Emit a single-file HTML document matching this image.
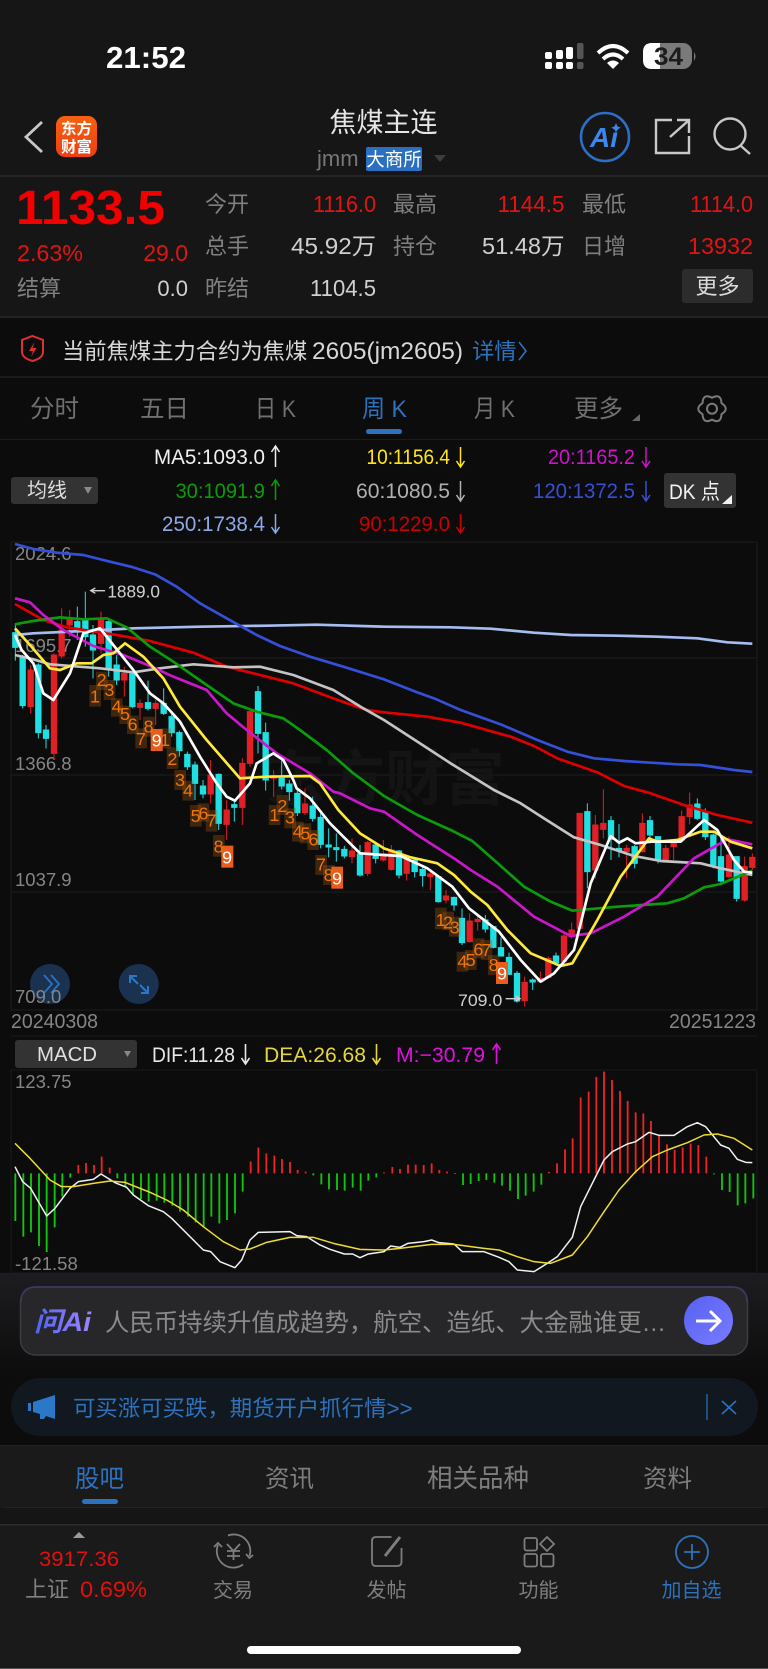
<!DOCTYPE html>
<html lang="zh"><head><meta charset="utf-8"><title>焦煤主连</title>
<style>
html,body{margin:0;padding:0;background:#0c0c0c;width:768px;height:1669px;overflow:hidden}
svg{display:block}
text{font-family:"Liberation Sans","Noto Sans CJK SC",sans-serif}
.g{fill:#808080}.w{fill:#d0d0d0}.r{fill:#e01414}.b{fill:#2c72bd}.e{text-anchor:end}.m{text-anchor:middle}
.f22{font-size:22px}.f23{font-size:23px}
.lab{font-size:18.5px;fill:#858585}
.ma{font-size:21px}
.td{font-size:54px;fill:#f07408;text-anchor:middle}
.n9{font-size:54px;fill:#fff;text-anchor:middle}
</style></head><body>
<svg width="768" height="1669" viewBox="0 0 768 1669" xmlns="http://www.w3.org/2000/svg">
<defs>
<linearGradient id="ai" gradientUnits="userSpaceOnUse" x1="34" y1="0" x2="92" y2="0"><stop offset="0" stop-color="#4f63f5"/><stop offset="1" stop-color="#9f84ff"/></linearGradient>
<linearGradient id="bt" x1="0" y1="0" x2="1" y2="1"><stop offset="0" stop-color="#5660f2"/><stop offset="1" stop-color="#7a7cff"/></linearGradient>
<linearGradient id="fade" x1="0" y1="0" x2="0" y2="1"><stop offset="0" stop-color="#1d1d21"/><stop offset="1" stop-color="#0d0d0d"/></linearGradient>
<linearGradient id="logo" x1="0" y1="0" x2="0" y2="1"><stop offset="0" stop-color="#f5620f"/><stop offset="1" stop-color="#ee3f12"/></linearGradient>
</defs>

<rect width="768" height="1669" fill="#0c0c0c"/>
<!-- status + header -->
<rect width="768" height="317" fill="#161616"/>
<text x="106" y="68" font-size="31" font-weight="700" fill="#fff" textLength="80" lengthAdjust="spacingAndGlyphs">21:52</text>
<g fill="#fff">
<rect x="545" y="52" width="7" height="7" rx="2"/><rect x="556" y="50" width="7" height="9" rx="2"/><rect x="566" y="47" width="7" height="12" rx="2"/>
<rect x="545" y="62" width="7" height="7" rx="2"/><rect x="556" y="62" width="7" height="7" rx="2"/><rect x="566" y="62" width="7" height="7" rx="2"/>
</g>
<rect x="577" y="43" width="6.5" height="16" rx="2" fill="#555"/><rect x="577" y="62" width="6.5" height="7" rx="2" fill="#555"/>
<g fill="none" stroke="#fff" stroke-width="4">
<path d="M598 53Q613 39 628 53"/><path d="M603 59Q613 50 623 59"/>
</g><path d="M607 63Q613 58 619 63L613 69Z" fill="#fff"/>
<rect x="643" y="43" width="49" height="26" rx="9" fill="#7a7a7a"/>
<path d="M652 43H660V69H652Q643 69 643 60V52Q643 43 652 43Z" fill="#fff"/>
<path d="M694 52Q697 56 694 61Z" fill="#777"/>
<text x="654" y="65" font-size="25" font-weight="700" fill="#1c1c1c" textLength="29" lengthAdjust="spacingAndGlyphs">34</text>

<path d="M42 122L26 137L42 152" fill="none" stroke="#c8c8c8" stroke-width="2.8"/>
<rect x="56" y="116" width="41" height="41" rx="9" fill="url(#logo)"/>
<text x="76.5" y="134" font-size="15.5" font-weight="700" fill="#fff" class="m">东方</text>
<text x="76.5" y="152" font-size="15.5" font-weight="700" fill="#fff" class="m">财富</text>
<text x="383.5" y="132" font-size="27" fill="#e6e6e6" class="m">焦煤主连</text>
<text x="317" y="166" font-size="22" fill="#777">jmm</text>
<rect x="366" y="147" width="56" height="24" rx="2" fill="#2a6fc0"/>
<text x="394" y="166" font-size="18.5" fill="#fff" class="m">大商所</text>
<path d="M434 155H446L440 162Z" fill="#3d3d3d"/>
<circle cx="605" cy="137" r="24" fill="none" stroke="#2c6fc4" stroke-width="2.6"/>
<text x="604" y="147" font-size="28" font-weight="700" font-style="italic" fill="#3b87f2" class="m">Ai</text>
<path d="M616 123l1.4 3.4 3.4 1.4-3.4 1.4-1.4 3.4-1.4-3.4-3.4-1.4 3.4-1.4z" fill="#3b87f2"/>
<path d="M672 120H656V153H689V136M670 137L688 121M677 120H689V133" fill="none" stroke="#c8c8c8" stroke-width="2.4"/>
<circle cx="730" cy="134" r="15.5" fill="none" stroke="#c8c8c8" stroke-width="2.4"/><path d="M741 146L750 154" stroke="#c8c8c8" stroke-width="2.4"/>
<rect y="175" width="768" height="2" fill="#232323"/>

<!-- quote -->
<text x="16" y="224" font-size="48" font-weight="700" fill="#f20000" textLength="149" lengthAdjust="spacingAndGlyphs">1133.5</text>
<text x="17" y="261" class="f23 r" textLength="66" lengthAdjust="spacingAndGlyphs">2.63%</text><text x="188" y="261" class="f23 r e">29.0</text>
<text x="17" y="296" class="g f22">结算</text><text x="188" y="296" class="w f22 e">0.0</text>

<text x="205" y="212" class="g f22">今开</text><text x="313" y="212" class="r f23" textLength="63" lengthAdjust="spacingAndGlyphs">1116.0</text>
<text x="393" y="212" class="g f22">最高</text><text x="497.5" y="212" class="r f23" textLength="67" lengthAdjust="spacingAndGlyphs">1144.5</text>
<text x="582" y="212" class="g f22">最低</text><text x="690" y="212" class="r f23" textLength="63" lengthAdjust="spacingAndGlyphs">1114.0</text>
<text x="205" y="254" class="g f22">总手</text><text x="291" y="254" class="w f23" textLength="85" lengthAdjust="spacingAndGlyphs">45.92万</text>
<text x="393" y="254" class="g f22">持仓</text><text x="482" y="254" class="w f23" textLength="82.5" lengthAdjust="spacingAndGlyphs">51.48万</text>
<text x="582" y="254" class="g f22">日增</text><text x="688" y="254" class="r f23" textLength="65" lengthAdjust="spacingAndGlyphs">13932</text>
<text x="205" y="296" class="g f22">昨结</text><text x="310" y="296" class="w f23" textLength="66" lengthAdjust="spacingAndGlyphs">1104.5</text>
<rect x="682" y="269" width="71" height="34" rx="3" fill="#2c2c2c"/>
<text x="717.5" y="294" font-size="22" fill="#dcdcdc" class="m">更多</text>
<rect y="316" width="768" height="2" fill="#232323"/>

<!-- banner -->
<path d="M32.5 336L43 340V352Q43 358 32.5 361Q22 358 22 352V340Z" fill="none" stroke="#e0302c" stroke-width="2"/>
<path d="M34.5 342L29 351H33L31 357L36.5 348H32.5Z" fill="#e0302c"/>
<text x="62" y="359" font-size="22.3" fill="#d8d8d8">当前焦煤主力合约为焦煤</text>
<text x="312" y="359" font-size="24" fill="#d8d8d8" textLength="151" lengthAdjust="spacingAndGlyphs">2605(jm2605)</text>
<text x="472" y="359" font-size="22.3" class="b">详情</text><path d="M519 342L526 351L519 360" fill="none" stroke="#2c72bd" stroke-width="1.6"/>
<rect y="376" width="768" height="2" fill="#1b1b1b"/>

<!-- period tabs -->
<g font-size="24.5" fill="#707070">
<text x="30" y="417">分时</text><text x="140" y="417">五日</text><text x="255" y="417" textLength="41" lengthAdjust="spacingAndGlyphs">日 K</text>
<text x="362" y="417" fill="#2c72bd" textLength="45" lengthAdjust="spacingAndGlyphs">周 K</text><text x="474" y="417" textLength="41" lengthAdjust="spacingAndGlyphs">月 K</text><text x="574" y="417">更多</text>
</g>
<path d="M640 414V421H632Z" fill="#666"/>
<path d="M712 397.7Q721 393.1 721.5 403.2Q730 408.7 721.5 414.2Q721 424.3 712 419.7Q703 424.3 702.5 414.2Q694 408.7 702.5 403.2Q703 393.1 712 397.7Z" fill="none" stroke="#7a7a7a" stroke-width="2" stroke-linejoin="round"/>
<circle cx="712" cy="408.7" r="5" fill="none" stroke="#7a7a7a" stroke-width="2"/>
<rect x="366" y="429" width="36" height="5" rx="2.5" fill="#2c72bd"/>
<rect y="439" width="768" height="1" fill="#1c1c1c"/>

<!-- MA legend -->
<text x="154" y="464" class="ma" fill="#f0f0f0" textLength="111" lengthAdjust="spacingAndGlyphs">MA5:1093.0</text>
<text x="366.5" y="464" class="ma" fill="#ffe519" textLength="83.5" lengthAdjust="spacingAndGlyphs">10:1156.4</text>
<text x="548" y="464" class="ma" fill="#cc14c8" textLength="87" lengthAdjust="spacingAndGlyphs">20:1165.2</text>
<text x="175.5" y="498" class="ma" fill="#0b9c0b" textLength="89.5" lengthAdjust="spacingAndGlyphs">30:1091.9</text>
<text x="356" y="498" class="ma" fill="#b0b0b0" textLength="94" lengthAdjust="spacingAndGlyphs">60:1080.5</text>
<text x="533" y="498" class="ma" fill="#3a4ed4" textLength="102" lengthAdjust="spacingAndGlyphs">120:1372.5</text>
<text x="162" y="531" class="ma" fill="#8fa9e8" textLength="103" lengthAdjust="spacingAndGlyphs">250:1738.4</text>
<text x="359" y="531" class="ma" fill="#cc0000" textLength="91" lengthAdjust="spacingAndGlyphs">90:1229.0</text>
<g fill="none" stroke-width="1.5">
<path d="M275.5 447V467M271.5 452L275.5 446L279.5 452" stroke="#f0f0f0"/>
<path d="M460.5 447V466M456.5 461L460.5 467L464.5 461" stroke="#ffe519"/>
<path d="M646 447V466M642 461L646 467L650 461" stroke="#cc14c8"/>
<path d="M275.5 481V500M271.5 486L275.5 480L279.5 486" stroke="#0b9c0b"/>
<path d="M460.5 481V500M456.5 495L460.5 501L464.5 495" stroke="#b0b0b0"/>
<path d="M646 481V500M642 495L646 501L650 495" stroke="#3a4ed4"/>
<path d="M275.5 514V532M271.5 527L275.5 533L279.5 527" stroke="#8fa9e8"/>
<path d="M460.5 514V532M456.5 527L460.5 533L464.5 527" stroke="#cc0000"/>
</g>
<rect x="11" y="477" width="87" height="27" rx="3" fill="#333"/>
<text x="27" y="497" font-size="20" fill="#ddd">均线</text>
<path d="M84 487H92L88 494Z" fill="#888"/>
<rect x="664" y="473" width="72" height="35" rx="3" fill="#333"/>
<text x="669" y="499" font-size="21.5" fill="#f2f2f2" textLength="51" lengthAdjust="spacingAndGlyphs">DK 点</text>
<path d="M732 495V504H722Z" fill="#f2f2f2"/>

<!-- K chart -->
<rect x="11" y="542" width="746" height="468" fill="#0c0c0c" stroke="#1c1c1c"/>
<g stroke="#1e1e1e" stroke-width="1"><path d="M11 658H757M11 775H757M11 892H757"/></g>
<path d="M11 1036H757" stroke="#1c1c1c"/>
<text x="265" y="800" font-size="60" font-weight="700" fill="#141414">东方财富</text>

<text x="15" y="560" class="lab">2024.6</text>
<text x="15" y="652" class="lab">1695.7</text>
<text x="15" y="770" class="lab">1366.8</text>
<text x="15" y="886" class="lab">1037.9</text>

<g transform="translate(0,540) scale(.33333)">
<g fill="#20dfe3" stroke="#20dfe3" stroke-width="3">
<path d="M46 250V362M38 278h16v44h-16zM68 345V505M60 350h16v147h-16zM115 370V595M107 375h16v203h-16zM138 555V625M130 570h16v25h-16zM232 200V300M224 245h16v30h-16zM256 155V320M248 240h16v50h-16zM279 255V415M271 285h16v45h-16zM326 235V410M318 245h16v140h-16zM350 345V435M342 375h16v45h-16zM397 400V505M389 400h16v100h-16zM444 422V512M436 488h16v17h-16zM491 445V525M483 490h16v30h-16zM515 518V590M507 530h16v48h-16zM538 572V650M530 578h16v54h-16zM562 635V690M554 643h16v37h-16zM585 665V780M577 675h16v55h-16zM609 720V775M601 738h16v24h-16zM656 700V870M648 703h16v147h-16zM703 780V845M695 794h16v8h-16zM774 438V640M766 455h16v125h-16zM797 548V752M789 578h16v142h-16zM845 655V748M837 715h16v23h-16zM868 720V782M860 732h16v23h-16zM892 745V828M884 760h16v58h-16zM938 770V845M930 798h16v37h-16zM962 820V925M954 832h16v81h-16zM986 865V952M978 915h16v6h-16zM1009 880V965M1001 923h16v6h-16zM1033 918V955M1025 928h16v20h-16zM1080 915V1010M1072 942h16v63h-16zM1127 910V970M1119 915h16v40h-16z"/>
<path d="M1197 930V1015M1189 933h16v72h-16zM1244 955V1012M1236 960h16v35h-16zM1268 975V1040M1260 988h16v19h-16zM1315 1005V1088M1307 1010h16v75h-16zM1362 1070V1112M1354 1072h16v23h-16zM1386 1105V1215M1378 1135h16v73h-16zM1456 1125V1178M1448 1140h16v27h-16zM1480 1160V1225M1472 1160h16v62h-16zM1503 1192V1250M1495 1223h16v25h-16zM1527 1238V1305M1519 1252h16v51h-16zM1551 1293V1388M1543 1300h16v83h-16zM1598 1315V1350M1590 1320h16v6h-16zM1668 1238V1275M1660 1248h16v20h-16zM1762 790V1045M1754 815h16v180h-16zM1833 828V960M1825 842h16v56h-16zM1857 852V952M1849 925h16v6h-16zM1904 915V985M1896 920h16v50h-16zM1950 828V910M1942 842h16v43h-16zM1974 890V970M1966 890h16v70h-16zM2092 775V840M2084 792h16v43h-16zM2116 805V900M2108 815h16v75h-16zM2140 880V985M2132 885h16v90h-16zM2163 890V1030M2155 950h16v73h-16zM2210 950V1085M2202 950h16v125h-16z"/>
</g>
<g fill="#e02024" stroke="#e02024" stroke-width="3">
<path d="M92 375V520M84 390h16v110h-16zM162 340V660M154 345h16v295h-16zM185 205V355M177 270h16v78h-16zM209 210V290M201 238h16v17h-16zM303 215V340M295 240h16v70h-16zM373 380V470M365 400h16v20h-16zM420 478V540M412 490h16v12h-16zM467 480V555M459 490h16v15h-16zM632 660V790M624 705h16v57h-16zM680 780V900M672 810h16v43h-16zM727 655V855M719 670h16v132h-16zM750 505V680M742 515h16v155h-16zM821 690V770M813 707h16v8h-16zM915 745V825M907 792h16v26h-16zM1056 895V970M1048 933h16v17h-16zM1103 903V1008M1095 908h16v92h-16zM1150 900V965M1142 942h16v18h-16z"/>
<path d="M1174 915V992M1166 930h16v58h-16zM1220 945V1022M1212 955h16v45h-16zM1291 992V1050M1283 1002h16v8h-16zM1338 1050V1090M1330 1068h16v12h-16zM1409 1120V1208M1401 1143h16v62h-16zM1433 1128V1172M1425 1138h16v7h-16zM1574 1310V1400M1566 1327h16v55h-16zM1621 1295V1328M1613 1315h16v10h-16zM1645 1250V1315M1637 1255h16v57h-16zM1692 1175V1278M1684 1188h16v77h-16zM1715 1148V1195M1707 1170h16v20h-16zM1739 820V1165M1731 820h16v345h-16zM1786 825V1015M1778 855h16v135h-16zM1810 748V895M1802 850h16v18h-16zM1880 915V1015M1872 925h16v10h-16zM1927 820V938M1919 850h16v85h-16zM1997 915V965M1989 925h16v35h-16zM2021 900V960M2013 910h16v10h-16zM2045 812V905M2037 830h16v70h-16zM2069 758V853M2061 795h16v35h-16zM2187 890V1015M2179 945h16v65h-16zM2234 950V1085M2226 980h16v100h-16zM2257 940V990M2249 952h16v30h-16z"/>
</g>

<!-- TD sequence -->
<g fill="#a85a10" fill-opacity=".32">
<rect x="268" y="435" width="35" height="65"/><rect x="288" y="395" width="35" height="55"/><rect x="311" y="420" width="35" height="60"/><rect x="333" y="475" width="35" height="55"/><rect x="358" y="497" width="35" height="55"/><rect x="381" y="527" width="35" height="55"/><rect x="406" y="565" width="35" height="60"/><rect x="429" y="530" width="35" height="60"/><rect x="478" y="565" width="35" height="60"/><rect x="500" y="622" width="35" height="65"/><rect x="523" y="690" width="35" height="60"/><rect x="547" y="722" width="35" height="60"/><rect x="570" y="795" width="35" height="65"/><rect x="593" y="790" width="35" height="55"/><rect x="617" y="810" width="35" height="65"/><rect x="639" y="885" width="35" height="65"/><rect x="806" y="795" width="35" height="60"/><rect x="830" y="765" width="35" height="60"/><rect x="853" y="805" width="35" height="60"/><rect x="876" y="845" width="35" height="60"/><rect x="899" y="850" width="35" height="60"/><rect x="922" y="870" width="35" height="60"/><rect x="946" y="945" width="35" height="60"/><rect x="969" y="975" width="35" height="60"/>
<rect x="1305" y="1103" width="35" height="65"/><rect x="1327" y="1115" width="35" height="55"/><rect x="1347" y="1130" width="35" height="60"/><rect x="1370" y="1235" width="35" height="60"/><rect x="1395" y="1230" width="35" height="60"/><rect x="1418" y="1195" width="35" height="60"/><rect x="1442" y="1200" width="35" height="60"/><rect x="1464" y="1245" width="35" height="60"/>
</g>
<g fill="#e95c1c"><rect x="452" y="567" width="36" height="66"/><rect x="664" y="917" width="36" height="66"/><rect x="994" y="980" width="35" height="66"/><rect x="1488" y="1266" width="36" height="66"/></g>
<text x="285" y="488" class="td">1</text><text x="305" y="438" class="td">2</text><text x="328" y="468" class="td">3</text><text x="350" y="518" class="td">4</text><text x="375" y="540" class="td">5</text><text x="398" y="571" class="td">6</text><text x="423" y="615" class="td">7</text><text x="446" y="578" class="td">8</text><text x="470" y="620" class="n9">9</text><text x="495" y="618" class="td">1</text><text x="517" y="675" class="td">2</text><text x="540" y="738" class="td">3</text><text x="564" y="770" class="td">4</text><text x="587" y="846" class="td">5</text><text x="610" y="838" class="td">6</text><text x="634" y="860" class="td">7</text><text x="656" y="938" class="td">8</text><text x="681" y="970" class="n9">9</text><text x="823" y="843" class="td">1</text><text x="847" y="816" class="td">2</text><text x="870" y="851" class="td">3</text><text x="893" y="893" class="td">4</text><text x="916" y="898" class="td">5</text><text x="940" y="916" class="td">6</text><text x="963" y="991" class="td">7</text><text x="986" y="1023" class="td">8</text><text x="1011" y="1033" class="n9">9</text>
<text x="1322" y="1158" class="td">1</text><text x="1344" y="1166" class="td">2</text><text x="1364" y="1180" class="td">3</text><text x="1387" y="1283" class="td">4</text><text x="1412" y="1278" class="td">5</text><text x="1435" y="1246" class="td">6</text><text x="1459" y="1248" class="td">7</text><text x="1481" y="1293" class="td">8</text><text x="1506" y="1318" class="n9">9</text>

<g fill="none" stroke-width="8" stroke-linejoin="round" stroke-linecap="butt">
<polyline stroke="#a6bdf2" points="45,285 100,280 250,273 400,265 600,260 800,257 950,254 1152,260 1352,262 1472,266 1602,278 1712,285 1852,287 1972,290 2092,295 2182,307 2257,311"/>
<polyline stroke="#3550d8" points="45,12 100,27 170,38 250,45 330,65 400,82 465,103 530,140 600,190 680,235 770,285 840,318 930,350 1030,380 1152,418 1252,457 1302,475 1382,510 1502,553 1612,600 1702,635 1782,655 1872,663 2032,673 2102,675 2202,690 2257,696"/>
<polyline stroke="#e00000" points="45,192 130,240 200,262 350,285 450,303 580,338 680,380 760,400 880,430 1000,475 1100,510 1152,517 1282,530 1382,548 1532,590 1602,618 1672,655 1792,697 1872,738 1952,760 2052,795 2152,825 2257,848"/>
<polyline stroke="#c4c4c4" points="45,345 100,358 150,373 300,385 400,397 480,385 580,373 700,382 780,380 880,405 1000,450 1090,505 1152,540 1252,605 1352,670 1482,750 1562,790 1632,835 1722,892 1802,915 1902,948 1982,963 2102,970 2162,985 2257,1005"/>
<polyline stroke="#0a9c0a" points="45,253 100,243 180,232 250,238 320,235 380,262 450,320 520,365 620,435 700,490 770,515 850,535 900,570 980,630 1060,700 1152,768 1252,825 1352,870 1417,903 1482,960 1572,1040 1652,1085 1717,1112 1852,1100 2002,1090 2052,1075 2112,1042 2162,1032 2257,992"/>
<polyline stroke="#cc16cc" points="45,175 90,187 130,225 190,270 280,318 370,345 450,378 520,410 620,450 680,520 740,570 830,640 930,700 1000,755 1020,760 1110,805 1152,815 1252,885 1362,955 1412,990 1492,1040 1602,1130 1712,1188 1772,1180 1872,1130 1972,1070 2082,955 2182,898 2257,913"/>
<polyline stroke="#ffe93a" points="45,265 90,315 150,385 180,390 230,370 275,370 310,345 340,340 375,310 430,350 490,415 540,500 620,600 720,715 800,710 930,708 960,730 1015,810 1080,880 1152,925 1232,952 1312,970 1362,1005 1412,1055 1462,1095 1522,1170 1592,1240 1682,1278 1717,1270 1792,1140 1862,1010 1947,895 1972,905 2032,900 2102,875 2142,875 2192,905 2257,925"/>
<polyline stroke="#fff" points="45,285 65,330 100,370 130,460 160,480 210,400 250,280 300,265 340,315 400,390 450,460 490,490 540,545 600,650 650,730 680,770 705,782 750,730 770,670 820,640 850,660 880,720 890,745 930,775 990,850 1080,940 1152,945 1202,948 1282,985 1357,1040 1407,1105 1497,1175 1562,1260 1622,1325 1662,1300 1722,1230 1772,1030 1832,888 1857,908 1882,895 1907,910 1952,905 2042,905 2112,840 2152,870 2202,960 2232,995 2257,998"/>
</g>
<text x="322" y="172" font-size="52" fill="#d0d0d0" textLength="158" lengthAdjust="spacingAndGlyphs">1889.0</text>
<path d="M315 152H274M286 144L272 152L286 160" fill="none" stroke="#d0d0d0" stroke-width="4"/>
<text x="1374" y="1398" font-size="51" fill="#d0d0d0" textLength="133" lengthAdjust="spacingAndGlyphs">709.0</text>
<path d="M1517 1376H1558M1547 1368L1560 1376L1547 1384" fill="none" stroke="#d0d0d0" stroke-width="4"/>
</g>

<!-- chart buttons -->
<circle cx="50" cy="984" r="20" fill="#1a3150"/><circle cx="138.7" cy="984" r="20" fill="#1a3150"/>
<path d="M44 975L52 984L44 993M51 975L59 984L51 993" fill="none" stroke="#2c72bd" stroke-width="1.8"/>
<path d="M130 976L138 984M130 983V976H137M140 985L148 993M141 993H148V986" fill="none" stroke="#2c78c8" stroke-width="2"/>
<text x="15" y="1003" class="lab">709.0</text>
<text x="11" y="1028" font-size="20" fill="#858585" textLength="87" lengthAdjust="spacingAndGlyphs">20240308</text>
<text x="669" y="1028" font-size="20" fill="#858585" textLength="87" lengthAdjust="spacingAndGlyphs">20251223</text>

<!-- MACD head -->
<rect x="15" y="1040" width="122" height="28" rx="3" fill="#333"/>
<text x="37" y="1061" font-size="20" fill="#e0e0e0" textLength="60" lengthAdjust="spacingAndGlyphs">MACD</text>
<path d="M124 1051H131L127.5 1057Z" fill="#888"/>
<text x="152" y="1062" font-size="21" fill="#e8e8e8" textLength="83" lengthAdjust="spacingAndGlyphs">DIF:11.28</text>
<text x="264" y="1062" font-size="21" fill="#e5d63c" textLength="102" lengthAdjust="spacingAndGlyphs">DEA:26.68</text>
<text x="396" y="1062" font-size="21" fill="#e010e0" textLength="89" lengthAdjust="spacingAndGlyphs">M:−30.79</text>
<g fill="none" stroke-width="1.6">
<path d="M245.5 1044V1063M241.5 1058L245.5 1064L249.5 1058" stroke="#e8e8e8"/>
<path d="M376.5 1044V1063M372.5 1058L376.5 1064L380.5 1058" stroke="#e5d63c"/>
<path d="M496.5 1045V1064M492.5 1050L496.5 1044L500.5 1050" stroke="#e010e0"/>
</g>

<!-- MACD panel -->
<rect x="11" y="1070" width="746" height="203" fill="#0c0c0c" stroke="#1a1a1a"/>
<text x="15" y="1088" class="lab">123.75</text>
<text x="15" y="1270" class="lab">-121.58</text>
<g transform="translate(0,1030) scale(.33333)">
<path fill="none" stroke="#0ec80e" stroke-width="5.5" d="M46 430V573M70 430V620M93 430V607M117 430V648M140 430V666M164 430V592M187 430V500M211 430V443M352 430V445M376 430V470M399 430V495M423 430V507M446 430V515M470 430V512M493 430V518M517 430V527M540 430V545M564 430V560M587 430V577M611 430V590M634 430V560M658 430V580M681 430V570M705 430V550M728 430V485M940 430V436M964 430V463M987 430V478M1011 430V480M1034 430V482M1058 430V473M1082 430V482M1105 430V452M1129 430V442M1365 430V432M1389 430V465M1412 430V462M1436 430V453M1459 430V450M1483 430V458M1506 430V467M1530 430V482M1554 430V507M1577 430V497M1601 430V485M1624 430V464M2142 430V433M2166 430V480M2189 430V486M2213 430V526M2236 430V520M2260 430V505"/>
<path fill="none" stroke="#ee2226" stroke-width="5.5" d="M235 430V405M258 430V399M282 430V405M305 430V380M329 430V413M752 430V394M775 430V353M799 430V370M823 430V377M846 430V387M870 430V396M893 430V420M917 430V425M1152 430V427M1177 430V411M1200 430V417M1224 430V404M1247 430V404M1271 430V405M1295 430V400M1318 430V420M1341 430V425M1647 430V426M1671 430V400M1695 430V358M1718 430V325M1742 430V202M1766 430V185M1789 430V141M1812 430V125M1836 430V150M1860 430V183M1883 430V213M1907 430V247M1930 430V250M1953 430V273M1977 430V318M2001 430V343M2024 430V360M2048 430V352M2072 430V341M2095 430V345M2119 430V380"/>
<polyline fill="none" stroke="#f2f2f2" stroke-width="4.5" stroke-linejoin="round" points="45,410 68,455 92,475 140,558 165,535 210,475 235,455 280,448 303,432 345,458 380,472 400,495 445,527 490,545 515,565 610,660 632,665 660,695 705,713 725,690 750,630 775,607 870,605 890,617 920,620 960,645 990,658 1033,672 1058,672 1080,683 1105,672 1152,665 1172,648 1200,652 1224,640 1272,635 1295,630 1317,638 1362,642 1387,665 1452,665 1497,682 1527,695 1552,720 1602,725 1637,703 1672,680 1717,622 1742,530 1762,490 1812,390 1837,365 1882,342 1907,335 1947,307 1977,316 2022,316 2062,290 2092,278 2117,290 2162,345 2187,355 2212,388 2237,397 2257,398"/>
<polyline fill="none" stroke="#f0dc30" stroke-width="4.5" stroke-linejoin="round" points="45,340 90,385 150,450 185,470 220,470 280,460 330,453 375,457 450,487 500,510 550,540 610,590 670,635 720,660 750,657 800,637 870,622 940,622 1000,640 1080,658 1152,660 1200,655 1295,643 1362,643 1452,655 1497,660 1552,680 1602,695 1652,700 1717,675 1762,620 1812,545 1857,480 1907,425 1957,380 2002,360 2062,338 2112,315 2152,312 2202,325 2257,360"/>
</g>

<!-- AI bar -->
<rect y="1273" width="768" height="97" fill="url(#fade)"/>
<rect x="20.5" y="1287" width="727" height="68" rx="15" fill="#272729" stroke="#3c3c42" stroke-width="1.5"/>
<path d="M21 1302Q21 1287 36 1287H732Q747 1287 747 1302" fill="none" stroke="#3a3a62" stroke-width="1.5"/>
<text x="34" y="1331" font-size="27" font-weight="700" font-style="italic" fill="url(#ai)" textLength="57" lengthAdjust="spacingAndGlyphs">问Ai</text>
<text x="105" y="1331" font-size="24.4" fill="#8a8a8a">人民币持续升值成趋势，航空、造纸、大金融谁更…</text>
<ellipse cx="708.5" cy="1320.5" rx="24.5" ry="24.5" fill="url(#bt)"/>
<path d="M696 1321H720M710 1311L720 1321L710 1331" fill="none" stroke="#fff" stroke-width="3"/>

<!-- ad pill -->
<rect x="11" y="1378" width="747" height="58" rx="29" fill="#111820"/>
<path d="M33 1402L55 1395V1419L46 1416L44 1419H40L40 1414L33 1412ZM28 1403H31V1411H28Z" fill="#2c78c8"/>
<text x="73" y="1416" font-size="22.4" class="b">可买涨可买跌，期货开户抓行情&gt;&gt;</text>
<path d="M707 1394V1420" stroke="#2c72bd" stroke-width="1.2"/>
<path d="M722 1401L736 1414M736 1401L722 1414" stroke="#2c72bd" stroke-width="1.6"/>

<!-- bottom tabs -->
<rect y="1446" width="768" height="223" fill="#1a1a1a"/>
<rect y="1445" width="768" height="1" fill="#202020"/>
<g font-size="24.5" fill="#7e7e7e">
<text x="75" y="1487" fill="#2c72bd">股吧</text><text x="265" y="1487">资讯</text><text x="427" y="1487" font-size="25.5">相关品种</text><text x="643" y="1487">资料</text>
</g>
<rect x="82" y="1499" width="36" height="5" rx="2.5" fill="#2c72bd"/>
<rect x="6" y="1507" width="756" height="1" fill="#242424"/>
<rect y="1508" width="768" height="16" fill="#151515"/>
<rect y="1524" width="768" height="1.5" fill="#2c2c2c"/>

<path d="M79 1532L85 1538H73Z" fill="#9a9a9a"/>
<text x="39" y="1566" font-size="21.5" fill="#e01010" textLength="80" lengthAdjust="spacingAndGlyphs">3917.36</text>
<text x="25" y="1597" font-size="22" fill="#808080">上证</text>
<text x="80" y="1597" font-size="22.5" fill="#e01010" textLength="67" lengthAdjust="spacingAndGlyphs">0.69%</text>

<g fill="none" stroke="#7e7e7e" stroke-width="1.8">
<path d="M218 1545A16.5 16.5 0 0 0 243 1564.5"/>
<path d="M228 1535.5A16.5 16.5 0 0 1 249.5 1556"/>
<path d="M214 1547L218 1543L222 1547M246 1554L249.5 1558L253 1555"/>
<path d="M227 1544L233.5 1551L240 1544M227 1551H240M227 1556H240M233.5 1551V1560"/>
<path d="M391.5 1537H376Q372 1537 372 1541V1562Q372 1566 376 1566H397Q401.5 1566 401.5 1562V1548"/>
<rect x="524.5" y="1538" width="12.5" height="12.5" rx="2"/><path d="M547 1537L554 1544L547 1551L540 1544Z"/>
<rect x="524.5" y="1554" width="12.5" height="12.5" rx="2"/><rect x="541" y="1554" width="12.5" height="12.5" rx="2"/>
</g>
<path d="M400 1537L385 1556" stroke="#7e7e7e" stroke-width="3"/>
<g font-size="20" fill="#7e7e7e">
<text x="233" y="1597" class="m">交易</text><text x="386.5" y="1597" class="m">发帖</text><text x="538.5" y="1597" class="m">功能</text>
</g>
<circle cx="692" cy="1552" r="16" fill="none" stroke="#2c72bd" stroke-width="1.8"/>
<path d="M692 1544V1560M684 1552H700" stroke="#2c72bd" stroke-width="1.8"/>
<text x="691.5" y="1597" font-size="20" class="b m">加自选</text>

<rect x="247" y="1646" width="274" height="8" rx="4" fill="#fff"/>
<rect y="1668" width="768" height="1" fill="#555"/>
</svg>
</body></html>
